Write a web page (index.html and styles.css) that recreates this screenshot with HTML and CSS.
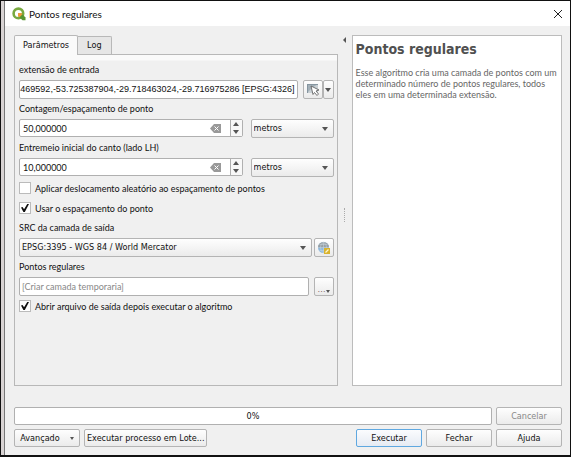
FILE: index.html
```html
<!DOCTYPE html>
<html lang="pt-BR">
<head>
<meta charset="utf-8">
<title>Pontos regulares</title>
<link rel="stylesheet" href="styles.css">
</head>
<body>
<main class="dialog">
  <header class="titlebar">
    <svg class="logo" viewBox="0 0 14 14" width="14" height="14" aria-hidden="true">
      <circle cx="6.4" cy="6.4" r="4.8" fill="none" stroke="#78a93f" stroke-width="2.6"/>
      <path d="M6 6h3.2l4.3 4.4v2.9h-3L6 9z" fill="#589632"/>
      <path d="M6 6h3.2l1.3 1.3-3 3L6 9z" fill="#ee9b3a"/>
    </svg>
    <h1 class="title">Pontos regulares</h1>
    <button class="close" type="button" aria-label="Fechar janela">
      <svg viewBox="0 0 10 10" width="10" height="10"><path d="M1 1l8 8M9 1l-8 8" stroke="#222" fill="none"/></svg>
    </button>
  </header>
  <form class="body">
    <div class="columns">
      <section class="left">
        <div class="tabs" role="tablist">
          <button class="tab active" type="button" role="tab" aria-selected="true">Parâmetros</button>
          <button class="tab" type="button" role="tab" aria-selected="false">Log</button>
        </div>
        <div class="panel" role="tabpanel">
          <label class="label" for="extent">extensão de entrada</label>
          <div class="row">
            <input class="field extent" id="extent" type="text" value="469592,-53.725387904,-29.718463024,-29.716975286 [EPSG:4326]">
            <div class="split">
              <button class="btn tool" type="button" aria-label="Selecionar extensão">
                <svg viewBox="0 0 14 13" width="14" height="13">
                  <path d="M1 1h11v9H1z" fill="#a3b0b8"/><path d="M1 10l5-5 6-4v9z" fill="#c9d0d4"/><path d="M1 1h11v1H1zM1 2h1v8H1z" fill="#8595a0"/>
                  <path d="M5 3l8 4-3 1 2.500 3-1.500 1.500L8.500 9.500 7 11.500z" fill="#fff" stroke="#555" stroke-width=".8"/>
                </svg>
              </button>
              <button class="btn arrow" type="button" aria-label="Mais opções"><span class="caret"></span></button>
            </div>
          </div>
          <label class="label" for="count">Contagem/espaçamento de ponto</label>
          <div class="row wide">
            <div class="field spin">
              <input id="count" type="text" inputmode="decimal" value="50,000000">
              <button class="clear" type="button" aria-label="Limpar"><svg viewBox="0 0 11 9" width="11" height="9"><path d="M4 0h7v9H4L0 4.500z" fill="#999"/><path d="M4.500 2.500l4 4M8.500 2.500l-4 4" stroke="#fff"/></svg></button>
              <span class="steps"><button type="button" aria-label="Aumentar"><span class="caret up"></span></button><button type="button" aria-label="Diminuir"><span class="caret"></span></button></span>
            </div>
            <div class="combo unit"><select aria-label="Unidade do espaçamento"><option>metros</option></select></div>
          </div>
          <label class="label" for="inset">Entremeio inicial do canto (lado LH)</label>
          <div class="row wide">
            <div class="field spin">
              <input id="inset" type="text" inputmode="decimal" value="10,000000">
              <button class="clear" type="button" aria-label="Limpar"><svg viewBox="0 0 11 9" width="11" height="9"><path d="M4 0h7v9H4L0 4.500z" fill="#999"/><path d="M4.500 2.500l4 4M8.500 2.500l-4 4" stroke="#fff"/></svg></button>
              <span class="steps"><button type="button" aria-label="Aumentar"><span class="caret up"></span></button><button type="button" aria-label="Diminuir"><span class="caret"></span></button></span>
            </div>
            <div class="combo unit"><select aria-label="Unidade do entremeio"><option>metros</option></select></div>
          </div>
          <div class="checks">
            <label class="check"><input type="checkbox">Aplicar deslocamento aleatório ao espaçamento de pontos</label>
            <label class="check"><input type="checkbox" checked>Usar o espaçamento do ponto</label>
          </div>
          <label class="label" for="crs">SRC da camada de saída</label>
          <div class="row tight">
            <div class="combo"><select id="crs"><option>EPSG:3395 - WGS 84 / World Mercator</option></select></div>
            <button class="btn square" type="button" aria-label="Selecionar SRC">
              <svg viewBox="0 0 14 14" width="14" height="14">
                <circle cx="6.500" cy="6.500" r="5.500" fill="#8fb9dc"/><path d="M1 6.500a5.500 5.500 0 0 1 11 0z" fill="#98a0a5"/>
                <path d="M1 6.500h11M6.500 1v11M2.500 3.500h8M2.500 9.500h8M6.500 1c-4 3-4 8 0 11M6.500 1c4 3 4 8 0 11" fill="none" stroke="#c9d7e1" stroke-width=".5"/>
                <path d="M7 7h6v6H7z" fill="#d9b32e"/><path d="M8.500 11.500l3-3" stroke="#fff7cf" stroke-width="1.300"/>
              </svg>
            </button>
          </div>
          <label class="label" for="output">Pontos regulares</label>
          <div class="row">
            <input class="field" id="output" type="text" placeholder="[Criar camada temporaria]">
            <button class="btn square dots" type="button" aria-label="Opções de saída">…<span class="caret"></span></button>
          </div>
          <label class="check"><input type="checkbox" checked>Abrir arquivo de saída depois executar o algoritmo</label>
        </div>
      </section>
      <div class="splitter"><button type="button" class="collapse" aria-label="Recolher ajuda"></button><span class="grip"></span></div>
      <aside class="help">
        <h2>Pontos regulares</h2>
        <p>Esse algoritmo cria uma camada de pontos com um determinado número de pontos regulares, todos eles em uma determinada extensão.</p>
      </aside>
    </div>
    <footer class="footer">
      <div class="actions">
        <div class="progress" role="progressbar" aria-label="Progresso" aria-valuenow="0">0%</div>
        <button class="btn push" type="button" disabled>Cancelar</button>
      </div>
      <div class="actions">
        <button class="btn push menu" type="button">Avançado<span class="caret"></span></button>
        <button class="btn batch" type="button">Executar processo em Lote...</button>
        <span class="spacer"></span>
        <button class="btn push primary" type="button">Executar</button>
        <button class="btn push" type="button">Fechar</button>
        <button class="btn push" type="button">Ajuda</button>
      </div>
    </footer>
  </form>
</main>
</body>
</html>
```
FILE: styles.css
```css
* { box-sizing: border-box; }

body {
  margin: 0;
  min-height: 100vh;
  display: flex;
  padding: 1px 1px 2px;
  background: #111;
  color: #111;
  font: 9px/11px Lato, sans-serif;
}

button, input, select { font: inherit; color: inherit; margin: 0; }
button { padding: 0; }

.tab, .btn, .progress, .combo select {
  font-family: "DejaVu Sans Condensed", "DejaVu Sans", sans-serif;
}

.dialog {
  flex: 1;
  display: flex;
  flex-direction: column;
  border-left: 3px solid #d8d3d3;
  box-shadow: inset 1px 0 #777;
  background: #f0f0f0;
}

.titlebar {
  height: 25px;
  display: flex;
  align-items: center;
  gap: 3px;
  margin-left: 1px;
  padding: 0 7px;
  background: #fff;
}

.title {
  flex: 1;
  margin: 0;
  font: 10px/14px Lato, sans-serif;
}

.close { display: flex; border: 0; background: none; }

.body {
  flex: 1;
  display: flex;
  flex-direction: column;
  padding: 9px 8px 8px 10px;
}

.columns {
  flex: 1;
  display: grid;
  grid-template-columns: minmax(0, 323fr) 14px minmax(0, 210fr);
}

.left { display: flex; flex-direction: column; }

.tabs { display: flex; align-items: flex-end; }

.tab {
  height: 18px;
  padding: 0 9px;
  border: 1px solid #b8b8b8;
  border-left: 0;
  border-bottom: 0;
  border-radius: 0 2px 0 0;
  background: #e6e6e6;
}

.tab.active {
  height: 20px;
  margin-bottom: -1px;
  padding: 0 8px;
  border-left: 1px solid #b8b8b8;
  border-radius: 2px 2px 0 0;
  background: #fafafa;
  position: relative;
}

.panel {
  flex: 1;
  display: flex;
  flex-direction: column;
  padding: 5px 3px 5px 4px;
  border: 1px solid #b8b8b8;
  background: linear-gradient(#fafafa 5px, #f0f0f0 6px);
}

.label { height: 20px; line-height: 20px; }

.row { height: 19px; display: flex; gap: 5px; }
.row.wide { gap: 8px; }
.row.tight { gap: 2px; }

.field {
  flex: 1;
  min-width: 0;
  padding: 0 2px;
  border: 1px solid #b0b0b0;
  border-radius: 2px;
  background: #fff;
}

.field::placeholder { color: #888; opacity: 1; }

.extent {
  padding: 0 2px 0 0;
  font-family: "Liberation Sans", sans-serif;
  text-align: right;
}

.btn {
  display: flex;
  align-items: center;
  justify-content: center;
  border: 1px solid #b4b4b4;
  border-radius: 2px;
  background: linear-gradient(#fefefe, #ebebeb);
}

.split { display: flex; }
.tool { width: 20px; }
.arrow { width: 11px; }
.square { width: 20px; }

.caret {
  border: 3px solid transparent;
  border-top: 4px solid #555;
  border-bottom: 0;
}

.caret.up { border-top: 0; border-bottom: 4px solid #555; }

.spin { height: 18px; display: flex; padding: 0; align-items: center; }
.spin input { flex: 1; min-width: 0; padding: 0 3px; border: 0; background: none; }
.clear { display: flex; margin-right: 9px; border: 0; background: none; }

.steps {
  width: 12px;
  align-self: stretch;
  display: flex;
  flex-direction: column;
  border-left: 1px solid #b0b0b0;
  background: #f8f8f8;
}

.steps button {
  flex: 1;
  display: flex;
  align-items: center;
  justify-content: center;
  border: 0;
  background: none;
}

.combo { flex: 1; display: flex; align-items: center; position: relative; }
.combo.unit { flex: 0 0 83px; }

.combo select {
  appearance: none;
  width: 100%;
  height: 100%;
  padding: 0 16px 0 2px;
  border: 1px solid #b4b4b4;
  border-radius: 2px;
  background: linear-gradient(#fefefe, #ebebeb);
}

.combo::after {
  content: "";
  position: absolute;
  right: 6px;
  border: 3px solid transparent;
  border-top: 4px solid #555;
  border-bottom: 0;
  pointer-events: none;
}

.checks { padding-top: 1px; }
.check { height: 20px; display: flex; align-items: center; gap: 4px; }

.check input {
  appearance: none;
  width: 12px;
  height: 12px;
  display: flex;
  align-items: center;
  justify-content: center;
  border: 1px solid #bbb;
  background: #fff;
}

.check input:checked::before {
  content: "";
  width: 8px;
  height: 8px;
  background: #111;
  clip-path: polygon(0 45%, 20% 38%, 38% 65%, 78% 0, 100% 0, 48% 100%, 30% 100%);
}

.dots { align-items: flex-end; color: #8a6a6a; }
.dots .caret { border-width: 3px 2px 0; margin-bottom: 2px; }

.splitter { display: flex; flex-direction: column; align-items: center; }

.collapse {
  margin-top: 2px;
  border: 3px solid transparent;
  border-left: 0;
  border-right: 3px solid #555;
  background: none;
}

.grip { height: 14px; margin: auto 0; border-left: 1px dotted #aaa; }

.help {
  padding: 5px 3px;
  border: 1px solid #bcbcbc;
  background: #fff;
  color: #666;
}

.help h2 {
  margin: 0 0 10px;
  color: #505050;
  font: bold 14px/16px "DejaVu Sans Condensed", "DejaVu Sans", sans-serif;
}

.help p { margin: 0; }

.footer { display: flex; flex-direction: column; gap: 4px; padding-top: 21px; }
.actions { height: 18px; display: flex; gap: 4px; }

.progress {
  flex: 1;
  display: flex;
  align-items: center;
  justify-content: center;
  border: 1px solid #b0b0b0;
  border-radius: 2px;
  background: #fff;
}

.push { width: 66px; }
.push:disabled { color: #888; }
.menu { gap: 10px; }
.menu .caret { border-width: 3px 2px 0; }
.batch { padding: 0 2px; }
.spacer { flex: 1; }
.primary { border-color: #5fa8e0; background: linear-gradient(#fbfcfe, #e6ebf3); }
```
